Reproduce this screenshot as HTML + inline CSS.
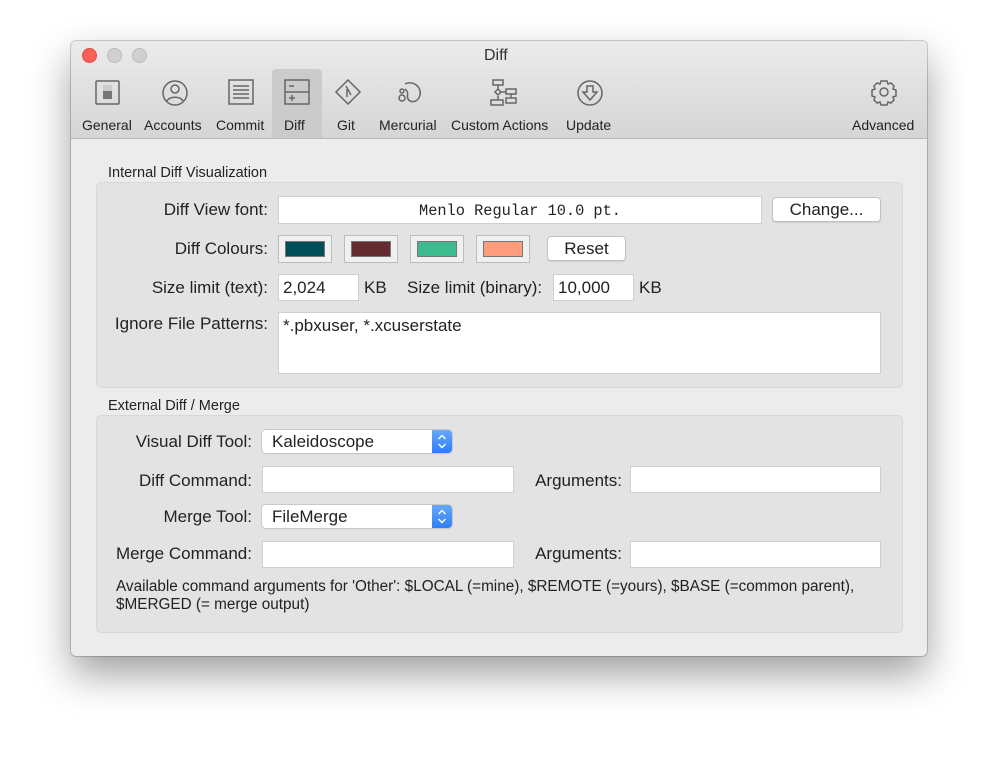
<!DOCTYPE html>
<html><head><style>
body{margin:0;width:998px;height:758px;background:#fff;font-family:"Liberation Sans",sans-serif;color:#222;position:relative;overflow:hidden}
.a{position:absolute}
.win{left:71px;top:41px;width:856px;height:615px;border-radius:5px;background:#ececec;box-shadow:0 18px 40px rgba(0,0,0,.38),0 0 0 1px rgba(0,0,0,.18);overflow:hidden}
.tb{left:71px;top:41px;width:856px;height:97px;background:linear-gradient(#ebebeb,#d5d5d5);border-bottom:1px solid #b9b9b9;border-radius:5px 5px 0 0}
.dot{width:13px;height:13px;border-radius:50%;top:48px}
.lab{font-size:14px;top:117px;text-align:center}
.t{font-size:17px;text-align:right;white-space:nowrap}
.box{background:#e3e3e3;border:1px solid #d8d8d8;border-radius:5px;left:96px;width:805px}
.f{background:#fff;border:1px solid #cfcfcf;box-sizing:border-box;font-size:17px;padding:3px 4px;white-space:nowrap}
.sw{width:54px;height:28px;background:#f0f0f0;border:1px solid #bdbdbd;box-sizing:border-box;top:235px}
.sw i{position:absolute;left:6px;top:5px;width:40px;height:16px;border:1px solid #777;box-sizing:border-box}
.btn{background:#fff;border:1px solid #c2c2c2;border-radius:4px;font-size:17px;text-align:center;box-sizing:border-box;box-shadow:0 1px 1px rgba(0,0,0,.1)}
.pop{background:#fff;border-radius:4px;box-shadow:0 0 0 1px #c8c8c8,0 1px 1px rgba(0,0,0,.15);font-size:17px;box-sizing:border-box;padding:2px 10px;width:190px;height:23px}
.pop b{position:absolute;right:0;top:0;width:20px;height:23px;background:linear-gradient(#67a8fb,#2f7ef5);border-radius:0 4px 4px 0}
svg{position:absolute}
</style></head><body>
<div class="a win"></div>
<div class="a tb"></div>
<div class="a dot" style="left:82px;background:#fc5f57;border:0.5px solid #de4a42"></div>
<div class="a dot" style="left:107px;background:#d0d0d0;border:0.5px solid #bbb"></div>
<div class="a dot" style="left:132px;background:#d0d0d0;border:0.5px solid #bbb"></div>
<div class="a" style="left:484px;top:47px;font-size:16px;color:#333">Diff</div>
<div class="a" style="left:272px;top:69px;width:50px;height:69px;background:#cbcbcb;border-radius:4px 4px 0 0"></div>
<svg width="998" height="140" style="left:0;top:0" fill="none" stroke="#666" stroke-width="1.5">
<rect x="96" y="81" width="23" height="23" rx="1"/><rect x="103" y="85" width="9" height="14" fill="#777" stroke="none"/><rect x="103" y="85" width="9" height="6" fill="#ccc" stroke="none"/>
<circle cx="175" cy="93" r="12"/><circle cx="175" cy="89" r="4"/><path d="M167 101c2-5 14-5 16 0"/>
<rect x="229" y="80" width="24" height="24"/><path d="M233 86h16M233 90h16M233 94h16M233 98h16"/>
<rect x="285" y="80" width="24" height="24"/><path d="M285 92h24M289 86h5M289 98h6M292 95v6"/>
<path d="M348 80l12 12-12 12-12-12z"/><path d="M346 86l5 9M347 89v8"/>
<path d="M405 84c8-4 17 3 15 11-2 8-10 8-12 4-2-4 2-6-3-10"/><circle cx="402" cy="91" r="2"/><circle cx="402" cy="98" r="3"/>
<rect x="493" y="80" width="10" height="5"/><path d="M498 85v4M498 96v4"/><path d="M498 89l3 3-3 3-3-3z"/><rect x="491" y="100" width="12" height="5"/><path d="M501 92h5"/><rect x="506" y="89" width="10" height="5"/><rect x="506" y="98" width="10" height="5"/><path d="M511 94v4"/>
<circle cx="590" cy="93" r="12"/><path d="M587 86h6v6h4l-7 8-7-8h4z"/>
<circle cx="884" cy="92" r="4"/><path d="M881 81h6l1 3 3-1 3 3-1 3 3 1v6l-3 1 1 3-3 3-3-1-1 3h-6l-1-3-3 1-3-3 1-3-3-1v-6l3-1-1-3 3-3 3 1z"/>
</svg>
<div class="a lab" style="left:82px">General</div>
<div class="a lab" style="left:144px">Accounts</div>
<div class="a lab" style="left:216px">Commit</div>
<div class="a lab" style="left:284px">Diff</div>
<div class="a lab" style="left:337px">Git</div>
<div class="a lab" style="left:379px">Mercurial</div>
<div class="a lab" style="left:451px">Custom Actions</div>
<div class="a lab" style="left:566px">Update</div>
<div class="a lab" style="left:852px">Advanced</div>

<div class="a" style="left:108px;top:165px;font-size:14.5px">Internal Diff Visualization</div>
<div class="a box" style="top:182px;height:204px"></div>
<div class="a t" style="right:730px;top:200px">Diff View font:</div>
<div class="a f" style="left:278px;top:196px;width:484px;height:28px;text-align:center;font-family:'Liberation Mono',monospace;font-size:15.3px;padding-top:5px">Menlo Regular 10.0 pt.</div>
<div class="a btn" style="left:772px;top:197px;width:109px;height:25px;padding-top:2px">Change...</div>
<div class="a t" style="right:730px;top:239px">Diff Colours:</div>
<div class="a sw" style="left:278px"><i style="background:#024e58"></i></div>
<div class="a sw" style="left:344px"><i style="background:#642c30"></i></div>
<div class="a sw" style="left:410px"><i style="background:#3dba8e"></i></div>
<div class="a sw" style="left:476px"><i style="background:#fe9d7d"></i></div>
<div class="a btn" style="left:547px;top:236px;width:79px;height:25px;padding-top:2px">Reset</div>
<div class="a t" style="right:730px;top:278px">Size limit (text):</div>
<div class="a f" style="left:278px;top:274px;width:81px;height:27px">2,024</div>
<div class="a" style="left:364px;top:278px;font-size:17px">KB</div>
<div class="a" style="left:407px;top:278px;font-size:17px">Size limit (binary):</div>
<div class="a f" style="left:553px;top:274px;width:81px;height:27px">10,000</div>
<div class="a" style="left:639px;top:278px;font-size:17px">KB</div>
<div class="a t" style="right:730px;top:314px">Ignore File Patterns:</div>
<div class="a f" style="left:278px;top:312px;width:603px;height:62px">*.pbxuser, *.xcuserstate</div>

<div class="a" style="left:108px;top:398px;font-size:14.5px">External Diff / Merge</div>
<div class="a box" style="top:415px;height:216px"></div>
<div class="a t" style="right:746px;top:432px">Visual Diff Tool:</div>
<div class="a pop" style="left:262px;top:430px">Kaleidoscope<b><svg width="20" height="23" fill="none" stroke="#fff" stroke-width="1.4"><path d="M6.5 9l3.5-3.5 3.5 3.5M6.5 14l3.5 3.5 3.5-3.5"/></svg></b></div>
<div class="a t" style="right:746px;top:471px">Diff Command:</div>
<div class="a f" style="left:262px;top:466px;width:252px;height:27px"></div>
<div class="a t" style="right:376px;top:471px">Arguments:</div>
<div class="a f" style="left:630px;top:466px;width:251px;height:27px"></div>
<div class="a t" style="right:746px;top:507px">Merge Tool:</div>
<div class="a pop" style="left:262px;top:505px">FileMerge<b><svg width="20" height="23" fill="none" stroke="#fff" stroke-width="1.4"><path d="M6.5 9l3.5-3.5 3.5 3.5M6.5 14l3.5 3.5 3.5-3.5"/></svg></b></div>
<div class="a t" style="right:746px;top:544px">Merge Command:</div>
<div class="a f" style="left:262px;top:541px;width:252px;height:27px"></div>
<div class="a t" style="right:376px;top:544px">Arguments:</div>
<div class="a f" style="left:630px;top:541px;width:251px;height:27px"></div>
<div class="a" style="left:116px;top:578px;font-size:15.3px;line-height:18px;width:780px">Available command arguments for 'Other': $LOCAL (=mine), $REMOTE (=yours), $BASE (=common parent),<br>$MERGED (= merge output)</div>
</body></html>
